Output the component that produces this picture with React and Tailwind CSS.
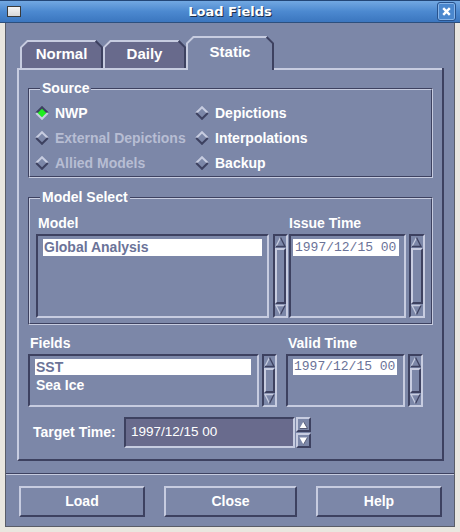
import React from "react";

const L = "#c7cce0";
const D = "#3d4160";
const BODY = "#7c87a8";

const raised =
  "border-2 border-t-[#c7cce0] border-l-[#c7cce0] border-r-[#3d4160] border-b-[#3d4160]";
const sunken =
  "border-2 border-t-[#3d4160] border-l-[#3d4160] border-r-[#c7cce0] border-b-[#c7cce0]";

function Diamond({ selected }) {
  return (
    <svg width="14" height="14" viewBox="0 0 14 14" className="shrink-0">
      <polygon points="7,1.5 12.5,7 7,12.5 1.5,7" fill={selected ? "#1fee1f" : BODY} />
      <path d="M1.2,7 L7,1.2 L12.8,7" stroke={selected ? D : L} strokeWidth="2" fill="none" />
      <path d="M1.2,7 L7,12.8 L12.8,7" stroke={selected ? L : D} strokeWidth="2" fill="none" />
    </svg>
  );
}

function Radio({ label, selected, disabled }) {
  return (
    <div className="h-[25px] flex items-center gap-[6px]">
      <Diamond selected={selected} />
      <span
        className={
          "text-[14px] font-bold leading-[16px] " +
          (disabled ? "text-[#b7bdd3]" : "text-white")
        }
      >
        {label}
      </span>
    </div>
  );
}

function Group({ label, className, innerClass, children }) {
  return (
    <div
      className={
        "relative border border-t-[#3d4160] border-l-[#3d4160] border-r-[#c7cce0] border-b-[#c7cce0] " +
        className
      }
    >
      <div
        className={
          "h-full border border-t-[#c7cce0] border-l-[#c7cce0] border-r-[#3d4160] border-b-[#3d4160] " +
          innerClass
        }
      >
        {children}
      </div>
      <div className="absolute left-[11px] top-[-9px] px-[2px] bg-[#7c87a8] text-white font-bold text-[14px] leading-[16px]">
        {label}
      </div>
    </div>
  );
}

function UpArrow() {
  return (
    <svg width="11" height="12" viewBox="0 0 11 12" className="shrink-0">
      <polygon points="5.5,1.5 10,10.5 1,10.5" fill={BODY} />
      <path d="M1,10.5 L5.5,1.5" stroke={L} strokeWidth="1.3" fill="none" />
      <path d="M5.5,1.5 L10,10.5 L1,10.5" stroke={D} strokeWidth="1.3" fill="none" />
    </svg>
  );
}

function DownArrow() {
  return (
    <svg width="11" height="12" viewBox="0 0 11 12" className="shrink-0">
      <polygon points="1,1.5 10,1.5 5.5,10.5" fill={BODY} />
      <path d="M10,1.5 L1,1.5 L5.5,10.5" stroke={L} strokeWidth="1.3" fill="none" />
      <path d="M10,1.5 L5.5,10.5" stroke={D} strokeWidth="1.3" fill="none" />
    </svg>
  );
}

function Scrollbar({ className }) {
  return (
    <div className={"flex flex-col bg-[#7c87a8] " + sunken + " " + className}>
      <UpArrow />
      <div className={"flex-1 " + raised} />
      <DownArrow />
    </div>
  );
}

function Button({ label, className }) {
  return (
    <div
      className={
        "h-[31px] flex items-center justify-center text-white font-bold text-[14px] " +
        raised +
        " " +
        className
      }
    >
      {label}
    </div>
  );
}

function TabShape({ w, h, fill }) {
  return (
    <svg width={w} height={h} viewBox={`0 0 ${w} ${h}`} className="absolute left-0 top-0">
      <polygon points={`0,7 7,0 ${w - 7},0 ${w},7 ${w},${h} 0,${h}`} fill={fill} />
      <path d={`M1,${h} V7.4 L7.4,1 H${w - 7}`} stroke={L} strokeWidth="2" fill="none" />
      <path d={`M${w - 7.4},1 L${w - 1},7.4 V${h}`} stroke={D} strokeWidth="2" fill="none" />
    </svg>
  );
}

function Tab({ label, w }) {
  return (
    <div className="relative flex flex-col" style={{ width: w }}>
      <div className="relative h-[28px]">
        <TabShape w={w} h={28} fill="#686a8c" />
        <div className="relative h-[28px] flex items-center justify-center text-white font-bold text-[15px]">
          {label}
        </div>
      </div>
      <div className="h-[2px] bg-[#c7cce0]" />
    </div>
  );
}

export default function App() {
  return (
    <div className="w-[460px] h-[532px] bg-[#e9e6df] flex flex-col font-['Liberation_Sans',sans-serif] overflow-hidden">
      {/* Title bar */}
      <div className="h-[23px] shrink-0 flex items-center bg-linear-to-b from-[#72a8e2] via-[#4c89d0] to-[#3b76bf] border-t border-t-[#234677] border-b border-b-[#2c4f7e]">
        <div className="w-[26px] pl-[7px] flex items-center">
          <div className="w-[14px] h-[11px] border border-[#3a3a3a] bg-linear-to-b from-[#f4f4f4] to-[#d8d8d8]" />
        </div>
        <div className="flex-1 text-center text-white font-bold text-[13px] font-['DejaVu_Sans',sans-serif] [text-shadow:1px_1px_0_#1e2f4a]">
          Load Fields
        </div>
        <div className="w-[26px] pr-[4px] flex justify-end">
          <div className="w-[19px] h-[19px] rounded-[3px] border border-[#28528c] bg-[#4a87ce] shadow-[inset_0_0_0_1px_#86b4e8] flex items-center justify-center">
            <svg width="9" height="9" viewBox="0 0 9 9">
              <path d="M1.2,1.2 L7.8,7.8 M7.8,1.2 L1.2,7.8" stroke="white" strokeWidth="2.4" />
            </svg>
          </div>
        </div>
      </div>

      {/* Body */}
      <div className="ml-[5px] mr-[5px] h-[504px] bg-[#7c87a8] border-l border-r border-b border-[#5a5d68] flex flex-col">
        <div className="pt-[13px] pl-[11px] pr-[10px]">
          {/* Tabs */}
          <div className="flex items-end h-[34px]">
            <div className="w-[3px] h-[2px] bg-[#c7cce0]" />
            <Tab label="Normal" w={83} />
            <Tab label="Daily" w={83} />
            <div className="relative w-[88px] h-[34px]">
              <TabShape w={88} h={34} fill={BODY} />
              <div className="relative h-[33px] flex items-center justify-center text-white font-bold text-[15px]">
                Static
              </div>
            </div>
            <div className="flex-1 h-[2px] bg-[#c7cce0] border-r-2 border-r-[#3d4160]" />
          </div>

          {/* Panel */}
          <div className="h-[391px] border-l-2 border-l-[#c7cce0] border-r-2 border-r-[#3d4160] border-b-2 border-b-[#3d4160] px-[9px] flex flex-col">
            <Group label="Source" className="mt-[18px] h-[90px]" innerClass="pt-[10px] pl-[5px]">
              <div className="grid grid-cols-[160px_1fr]">
                <Radio label="NWP" selected />
                <Radio label="Depictions" />
                <Radio label="External Depictions" disabled />
                <Radio label="Interpolations" />
                <Radio label="Allied Models" disabled />
                <Radio label="Backup" />
              </div>
            </Group>

            <Group label="Model Select" className="mt-[19px] h-[128px]" innerClass="pt-[16px] pl-[6px]">
              <div className="flex text-white font-bold text-[14px] leading-[16px]">
                <div className="w-[253px] pl-[2px]">Model</div>
                <div>Issue Time</div>
              </div>
              <div className="flex mt-[3px] h-[84px]">
                <div className={"w-[233px] h-full pt-[3px] pl-[5px] " + sunken}>
                  <div className="w-[219px] h-[17px] bg-white pl-[1px] text-[#6b7398] font-bold text-[14px] leading-[17px]">
                    Global Analysis
                  </div>
                </div>
                <Scrollbar className="ml-[4px] w-[15px] h-full" />
                <div className={"ml-[1px] w-[117px] h-full pt-[3px] pl-[2px] " + sunken}>
                  <div className="w-[106px] h-[17px] bg-white pl-[2px] text-[#6b7398] text-[13px] leading-[17px] font-['Liberation_Mono',monospace]">
                    1997/12/15 00
                  </div>
                </div>
                <Scrollbar className="ml-[3px] w-[16px] h-full" />
              </div>
            </Group>

            {/* Fields */}
            <div className="mt-[10px] flex text-white font-bold text-[14px] leading-[16px]">
              <div className="w-[258px] pl-[2px]">Fields</div>
              <div className="pl-[2px]">Valid Time</div>
            </div>
            <div className="flex mt-[3px] h-[53px]">
              <div className={"w-[231px] h-full pt-[3px] pl-[5px] " + sunken}>
                <div className="w-[216px] h-[16px] bg-white pl-[1px] text-[#6b7398] font-bold text-[14px] leading-[16px]">
                  SST
                </div>
                <div className="mt-[2px] h-[17px] pl-[1px] text-white font-bold text-[14px] leading-[17px]">
                  Sea Ice
                </div>
              </div>
              <Scrollbar className="ml-[3px] w-[15px] h-full" />
              <div className={"ml-[9px] w-[119px] h-full pt-[3px] pl-[5px] " + sunken}>
                <div className="w-[104px] h-[16px] bg-white pl-[1px] text-[#6b7398] text-[13px] leading-[16px] font-['Liberation_Mono',monospace]">
                  1997/12/15 00
                </div>
              </div>
              <Scrollbar className="ml-[3px] w-[15px] h-full" />
            </div>

            {/* Target time */}
            <div className="mt-[10px] flex items-center h-[31px]">
              <div className="w-[96px] pl-[5px] text-white font-bold text-[14px]">Target Time:</div>
              <div className={"w-[171px] h-[31px] bg-[#696b8d] flex items-center pl-[5px] text-white text-[13.5px] " + sunken}>
                1997/12/15 00
              </div>
              <div className="ml-[1px] w-[15px] h-[31px] flex flex-col">
                <div className={"h-[15px] bg-[#7c87a8] flex items-center justify-center " + raised}>
                  <svg width="9" height="8" viewBox="0 0 9 8">
                    <polygon points="4.5,0.5 8.5,7.5 0.5,7.5" fill="white" />
                    <path d="M4.5,0.5 L8.5,7.5 L0.5,7.5" stroke="#555a75" strokeWidth="1" fill="none" />
                  </svg>
                </div>
                <div className={"mt-[1px] h-[15px] bg-[#7c87a8] flex items-center justify-center " + raised}>
                  <svg width="9" height="8" viewBox="0 0 9 8">
                    <polygon points="0.5,0.5 8.5,0.5 4.5,7.5" fill="white" />
                    <path d="M8.5,0.5 L4.5,7.5" stroke="#555a75" strokeWidth="1" fill="none" />
                  </svg>
                </div>
              </div>
            </div>
          </div>
        </div>

        {/* Separator */}
        <div className="mt-[12px] h-[2px] border-t border-t-[#3d4160] border-b border-b-[#c7cce0]" />

        {/* Buttons */}
        <div className="mt-[11px] flex pl-[13px] gap-[19px]">
          <Button label="Load" className="w-[126px]" />
          <Button label="Close" className="w-[133px]" />
          <Button label="Help" className="w-[126px]" />
        </div>
      </div>
    </div>
  );
}
